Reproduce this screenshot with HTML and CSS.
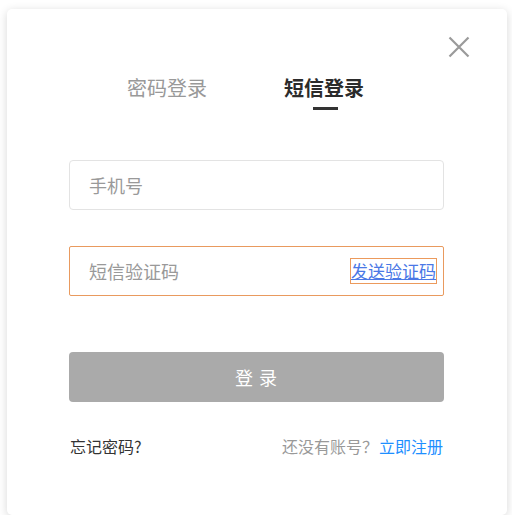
FILE: index.html
```html
<!DOCTYPE html>
<html lang="zh-CN">
<head>
<meta charset="utf-8">
<link rel="stylesheet" href="styles.css">
</head>
<body>
<div class="card">
  <button class="close" aria-label="关闭">
    <svg width="22" height="22" viewBox="0 0 22 22"><path d="M1.5 1.5 L20.5 20.5 M20.5 1.5 L1.5 20.5" stroke="#9a9a9a" stroke-width="2.2" fill="none"/></svg>
  </button>
  <div class="tabs">
    <div class="tab">密码登录</div>
    <div class="tab active">短信登录<span class="bar"></span></div>
  </div>
  <div class="field first">
    <input class="inp" type="text" placeholder="手机号">
  </div>
  <div class="field second">
    <input class="inp" type="text" placeholder="短信验证码">
    <span class="send">发送验证码</span>
  </div>
  <button class="submit">登 录</button>
  <div class="foot">
    <span class="forget">忘记密码?</span>
    <span class="reg">还没有账号？<a class="reglink">立即注册</a></span>
  </div>
</div>
</body>
</html>
```
FILE: styles.css
```css
html, body {
  margin: 0;
  padding: 0;
  background: #fff;
  font-family: "Noto Sans CJK SC", "Noto Sans", sans-serif;
}
.card {
  position: relative;
  box-sizing: border-box;
  width: 500px;
  height: 506px;
  margin: 9px 0 0 7px;
  padding: 0 63px 0 62px;
  background: #fff;
  border-radius: 5px;
  box-shadow: 0 2px 10px rgba(0,0,0,0.16);
}
.close {
  position: absolute;
  top: 27px;
  right: 37px;
  padding: 0;
  border: 0;
  background: none;
  width: 22px;
  height: 22px;
}
.close svg { display: block; }
.tabs {
  display: flex;
  gap: 77px;
  padding-top: 68px;
  padding-left: 58px;
}
.tab {
  position: relative;
  font-size: 20px;
  line-height: 22px;
  color: #999;
  height: 33px;
}
.tab.active {
  color: #2b2b2b;
  font-weight: bold;
}
.bar {
  position: absolute;
  left: 29px;
  top: 30px;
  width: 25px;
  height: 3px;
  background: #333;
}
.field {
  box-sizing: border-box;
  display: flex;
  align-items: center;
  height: 50px;
  border: 1px solid #e3e3e3;
  border-radius: 4px;
  padding: 0 6px 0 19px;
}
.field.first { margin-top: 50px; }
.field.second {
  margin-top: 36px;
  border-color: #e99a5e;
  border-radius: 2px;
}
.inp {
  flex: 1;
  min-width: 0;
  border: 0;
  outline: none;
  padding: 0;
  font-family: inherit;
  font-size: 18px;
  color: #333;
  background: transparent;
}
.inp::placeholder { color: #999; }
.send {
  box-sizing: border-box;
  height: 26px;
  line-height: 24px;
  border: 1px solid #ec9a5c;
  font-size: 17px;
  color: #4a78e6;
  text-decoration: underline;
  padding: 0;
  white-space: nowrap;
}
.submit {
  display: block;
  width: 100%;
  height: 50px;
  margin-top: 56px;
  border: 0;
  border-radius: 4px;
  background: #aaa;
  color: #fff;
  font-family: inherit;
  font-size: 18px;
  letter-spacing: 1px;
  padding: 0;
}
.foot {
  display: flex;
  justify-content: space-between;
  margin-top: 33px;
  font-size: 16px;
  line-height: 22px;
  padding: 0 1px;
}
.forget { color: #333; }
.reg { color: #999; }
.reglink { color: #1e8fff; margin-left: 1px; }
```
